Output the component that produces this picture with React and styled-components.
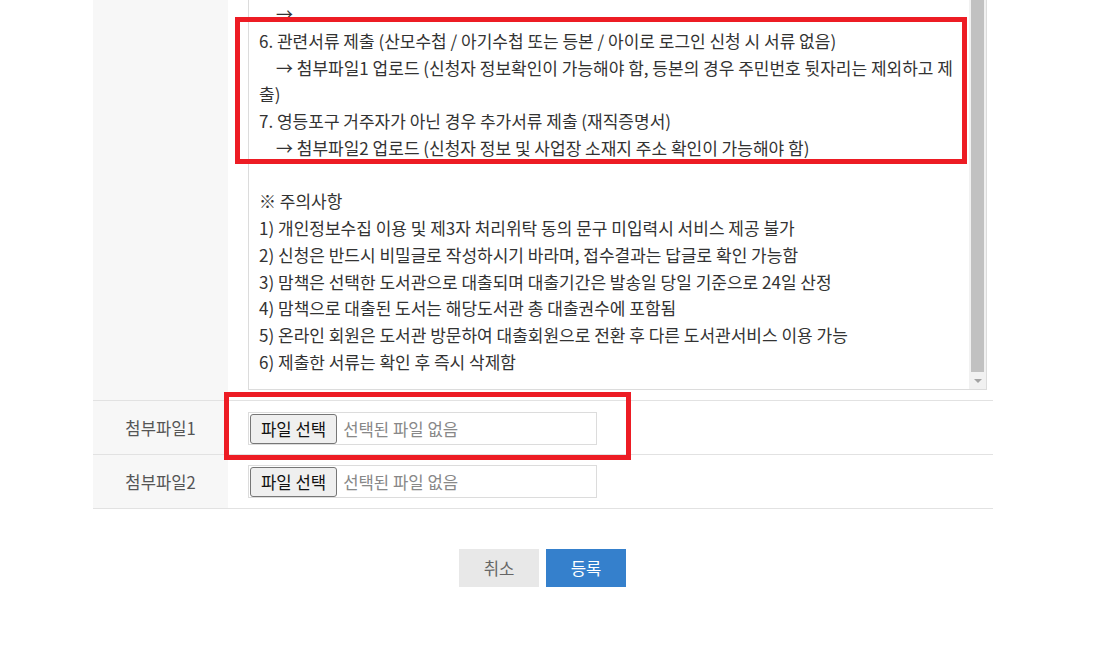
import React from "react";
import styled, { createGlobalStyle } from "styled-components";

const GlobalStyle = createGlobalStyle`
  html, body {
    margin: 0;
    padding: 0;
    background: #fff;
  }
  body {
    font-family: "Noto Sans CJK KR", "Noto Sans", sans-serif;
    color: #333;
    overflow: hidden;
  }
`;

const guideLines = [
  { text: "→", indent: true },
  { text: "6. 관련서류 제출 (산모수첩 / 아기수첩 또는 등본 / 아이로 로그인 신청 시 서류 없음)" },
  {
    text: "→ 첨부파일1 업로드 (신청자 정보확인이 가능해야 함, 등본의 경우 주민번호 뒷자리는 제외하고 제",
    indent: true,
  },
  { text: "출)" },
  { text: "7. 영등포구 거주자가 아닌 경우 추가서류 제출 (재직증명서)" },
  { text: "→ 첨부파일2 업로드 (신청자 정보 및 사업장 소재지 주소 확인이 가능해야 함)", indent: true },
  { text: "" },
  { text: "※ 주의사항" },
  { text: "1) 개인정보수집 이용 및 제3자 처리위탁 동의 문구 미입력시 서비스 제공 불가" },
  { text: "2) 신청은 반드시 비밀글로 작성하시기 바라며, 접수결과는 답글로 확인 가능함" },
  { text: "3) 맘책은 선택한 도서관으로 대출되며 대출기간은 발송일 당일 기준으로 24일 산정" },
  { text: "4) 맘책으로 대출된 도서는 해당도서관 총 대출권수에 포함됨" },
  { text: "5) 온라인 회원은 도서관 방문하여 대출회원으로 전환 후 다른 도서관서비스 이용 가능" },
  { text: "6) 제출한 서류는 확인 후 즉시 삭제함" },
];

const App = () => {
  return (
    <>
      <GlobalStyle />
      <Page>
        <FormTable>
          <Row>
            <Label />
            <Field $pad="0 6px 10px 20px">
              <TextBox>
                <TextContent>
                  {guideLines.map((line, i) => (
                    <Line key={i} $indent={line.indent}>
                      {line.text || "\u00a0"}
                    </Line>
                  ))}
                </TextContent>
                <ScrollBar>
                  <Thumb />
                  <ArrowButton>
                    <ArrowDown />
                  </ArrowButton>
                </ScrollBar>
              </TextBox>
            </Field>
          </Row>
          <Row>
            <Label>첨부파일1</Label>
            <Field $pad="11px 0 9px 20px">
              <FileBox>
                <FileButton>파일 선택</FileButton>
                <FileName>선택된 파일 없음</FileName>
              </FileBox>
            </Field>
          </Row>
          <Row>
            <Label>첨부파일2</Label>
            <Field $pad="10px 0 10px 20px">
              <FileBox>
                <FileButton>파일 선택</FileButton>
                <FileName>선택된 파일 없음</FileName>
              </FileBox>
            </Field>
          </Row>
        </FormTable>
        <Actions>
          <ActionButton>취소</ActionButton>
          <ActionButton $primary>등록</ActionButton>
        </Actions>
        <Highlight $left={142} $top={17} $width={732} $height={147} />
        <Highlight $left={131} $top={392} $width={407} $height={68} />
      </Page>
    </>
  );
};

const Page = styled.div`
  position: relative;
  width: 900px;
  margin-left: 93px;
  height: 664px;
`;

const FormTable = styled.div`
  display: flex;
  flex-direction: column;
`;

const Row = styled.div`
  display: grid;
  grid-template-columns: 135px 1fr;
  border-bottom: 1px solid #e2e2e2;
`;

const Label = styled.div`
  background: #f7f7f7;
  display: flex;
  align-items: center;
  justify-content: center;
  font-size: 16.6px;
  color: #555;
`;

const Field = styled.div`
  padding: ${(p) => p.$pad};
`;

const TextBox = styled.div`
  display: flex;
  height: 390px;
  border: 1px solid #dcdcdc;
  border-top: none;
  box-sizing: border-box;
  overflow: hidden;
`;

const TextContent = styled.div`
  flex: 1;
  padding: 1px 10px 0;
  overflow: hidden;
`;

const Line = styled.div`
  font-size: 17px;
  line-height: 26.75px;
  height: 26.75px;
  white-space: nowrap;
  color: #333;
  padding-left: ${(p) => (p.$indent ? "17px" : "0")};
`;

const ScrollBar = styled.div`
  width: 17px;
  background: #f1f1f1;
  display: flex;
  flex-direction: column;
`;

const Thumb = styled.div`
  flex: 1;
  margin: 0 2px;
  background: #c1c1c1;
`;

const ArrowButton = styled.div`
  height: 17px;
  display: flex;
  align-items: center;
  justify-content: center;
`;

const ArrowDown = styled.div`
  width: 0;
  height: 0;
  border-left: 4px solid transparent;
  border-right: 4px solid transparent;
  border-top: 4px solid #a3a3a3;
`;

const FileBox = styled.div`
  display: flex;
  align-items: center;
  width: 349px;
  height: 33px;
  box-sizing: border-box;
  border: 1px solid #dcdcdc;
  padding: 0 0 0 1px;
`;

const FileButton = styled.div`
  height: 30px;
  box-sizing: border-box;
  padding: 0 10px;
  display: flex;
  align-items: center;
  font-size: 16.7px;
  color: #111;
  background: #efefef;
  border: 1px solid #767676;
  border-radius: 3px;
`;

const FileName = styled.span`
  margin-left: 6px;
  font-size: 16.7px;
  color: #888;
`;

const Actions = styled.div`
  display: flex;
  justify-content: center;
  gap: 7px;
  margin-top: 40px;
  padding-right: 1px;
`;

const ActionButton = styled.div`
  width: 80px;
  height: 38px;
  display: flex;
  align-items: center;
  justify-content: center;
  font-size: 16.7px;
  color: ${(p) => (p.$primary ? "#fff" : "#666")};
  background: ${(p) => (p.$primary ? "#3580cc" : "#e8e8e8")};
`;

const Highlight = styled.div`
  position: absolute;
  left: ${(p) => p.$left}px;
  top: ${(p) => p.$top}px;
  width: ${(p) => p.$width}px;
  height: ${(p) => p.$height}px;
  box-sizing: border-box;
  border: 5px solid #ed1c24;
  pointer-events: none;
`;

export default App;
